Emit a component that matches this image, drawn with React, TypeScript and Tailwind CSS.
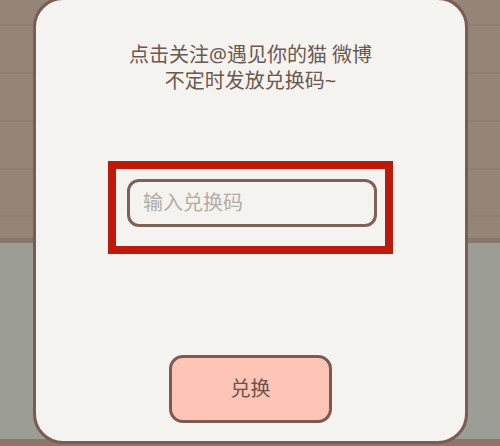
export default function App() {
  return (
    <div
      className="w-[500px] h-[446px] overflow-hidden bg-[linear-gradient(to_bottom,#958578_0,#958578_24px,#8e7e72_24px,#8e7e72_26px,#958578_26px,#958578_72px,#8e7e72_72px,#8e7e72_74px,#958578_74px,#958578_120px,#8e7e72_120px,#8e7e72_122px,#958578_122px,#958578_168px,#8e7e72_168px,#8e7e72_170px,#958578_170px,#958578_215px,#8f7f73_215px,#8f7f73_217px,#958578_217px,#958578_238px,#85776c_238px,#85776c_243px,#9c9d94_243px,#9c9d94_439px,#8b7668_439px)]"
      style={{ fontFamily: '"Noto Sans", "Noto Sans CJK SC", sans-serif' }}
    >
      {/* modal card */}
      <div className="ml-[33px] mt-[-3px] w-[435px] h-[447px] rounded-[30px] border-[3px] border-[#7a5c53] bg-[#f5f3ef] flex flex-col items-center">
        <div className="pt-[42px] text-center text-[20px] leading-[26px] text-[#6b5851]">
          <p>点击关注@遇见你的猫 微博</p>
          <p>不定时发放兑换码~</p>
        </div>

        {/* highlighted input */}
        <div className="mt-[67px] w-[285px] h-[93px] border-[8px] border-[#bd1a0c] pl-[11px] pt-[10px]">
          <div className="w-[250px] h-[48px] rounded-[12px] border-[3px] border-[#7d6259] flex items-center pl-[13px]">
            <span className="text-[20px] text-[#b4aca6]">输入兑换码</span>
          </div>
        </div>

        <button className="mt-[101px] w-[163px] h-[68px] rounded-[14px] border-[3px] border-[#7b5a52] bg-[#fec5b7] text-[20px] text-[#6e524a]">
          兑换
        </button>
      </div>
    </div>
  );
}
